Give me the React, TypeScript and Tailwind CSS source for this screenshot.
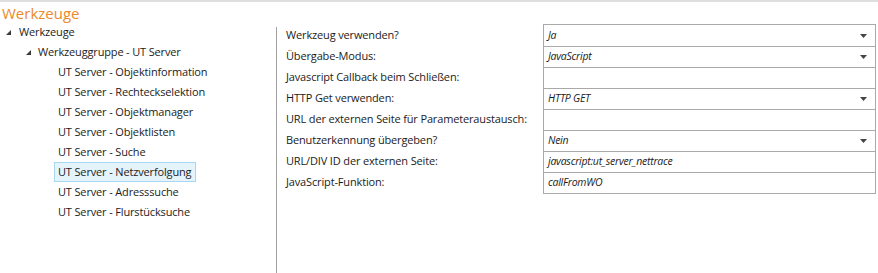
const tools = [
  'UT Server - Objektinformation',
  'UT Server - Rechteckselektion',
  'UT Server - Objektmanager',
  'UT Server - Objektlisten',
  'UT Server - Suche',
  'UT Server - Netzverfolgung',
  'UT Server - Adresssuche',
  'UT Server - Flurstücksuche',
];

const props: { label: string; value: string; combo?: boolean }[] = [
  { label: 'Werkzeug verwenden?', value: 'Ja', combo: true },
  { label: 'Übergabe-Modus:', value: 'JavaScript', combo: true },
  { label: 'Javascript Callback beim Schließen:', value: '' },
  { label: 'HTTP Get verwenden:', value: 'HTTP GET', combo: true },
  { label: 'URL der externen Seite für Parameteraustausch:', value: '' },
  { label: 'Benutzerkennung übergeben?', value: 'Nein', combo: true },
  { label: 'URL/DIV ID der externen Seite:', value: 'javascript:ut_server_nettrace' },
  { label: 'JavaScript-Funktion:', value: 'callFromWO' },
];

function Expander() {
  return (
    <svg width="7" height="7" viewBox="0 0 7 7" className="shrink-0">
      <path d="M6 1 L6 6 L1 6 Z" fill="#3a3a3a" />
    </svg>
  );
}

function ComboArrow() {
  return (
    <svg width="7" height="4" viewBox="0 0 7 4">
      <path d="M0 0 H7 L3.5 4 Z" fill="#444" />
    </svg>
  );
}

export default function App() {
  return (
    <div
      className="w-[878px] h-[273px] bg-white border-t-2 border-[#dedede] overflow-hidden text-[11px] tracking-[-0.15px] text-[#1b1b1b]"
      style={{ fontFamily: '"Open Sans", "Noto Sans", sans-serif' }}
    >
      {/* Title */}
      <div className="h-[21px] pl-[2px] text-[15px] tracking-normal leading-[22px] text-[#ea8a2c]">Werkzeuge</div>

      <div className="flex h-[250px]">
        {/* Tree */}
        <div className="w-[276px] shrink-0">
          <div className="flex items-center h-[19px] pl-[5px] gap-[7px]">
            <Expander />
            <span>Werkzeuge</span>
          </div>
          <div className="flex items-center h-[20px] pl-[25px] gap-[6px]">
            <Expander />
            <span>Werkzeuggruppe - UT Server</span>
          </div>
          {tools.map((t) => {
            const sel = t === 'UT Server - Netzverfolgung';
            return (
              <div key={t} className="flex items-center h-[20px] pl-[54px]">
                <span
                  className={`pl-[3px] pr-[4px] h-[20px] leading-[18px] border ${
                    sel ? 'bg-[#e5f3fb] border-[#a6d8f4]' : 'border-transparent'
                  }`}
                >
                  {t}
                </span>
              </div>
            );
          })}
        </div>

        {/* Divider + properties */}
        <div className="flex-1 flex border-l border-[#a0a0a0] mt-[4px]">
          <div className="w-[266px] pl-[9px] -mt-[3px]">
            {props.map((p) => (
              <div key={p.label} className="h-[21px] leading-[21px] whitespace-nowrap">
                {p.label}
              </div>
            ))}
          </div>
          <div className="w-[333px] -mt-[3px] border border-[#a9a9a9] self-start">
            {props.map((p, i) => (
              <div
                key={p.label}
                className={`h-[21px] flex items-center justify-between pl-[4px] pr-[8px] italic text-[10.5px] tracking-[-0.25px] ${
                  i > 0 ? 'border-t border-[#a9a9a9]' : ''
                }`}
              >
                <span>{p.value}</span>
                {p.combo && <ComboArrow />}
              </div>
            ))}
          </div>
        </div>
      </div>
    </div>
  );
}
